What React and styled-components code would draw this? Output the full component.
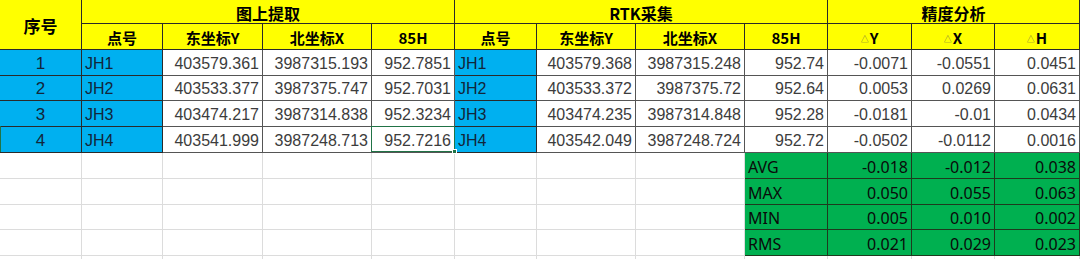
import React from "react";
import styled, { createGlobalStyle, css } from "styled-components";

const GlobalStyle = createGlobalStyle`
  html, body {
    margin: 0;
    padding: 0;
    background: #fff;
  }
  body {
    font-family: "Liberation Sans", "Noto Sans CJK SC", sans-serif;
  }
`;

const COLS = [82, 81, 100, 109, 83, 82, 99, 109, 83, 84, 83, 85];
const ROWS = [24, 26, 26, 25, 26, 26, 26, 26, 25, 26, 26];

const points = [
  {
    no: "1",
    map: ["JH1", "403579.361", "3987315.193", "952.7851"],
    rtk: ["JH1", "403579.368", "3987315.248", "952.74"],
    diff: ["-0.0071", "-0.0551", "0.0451"],
  },
  {
    no: "2",
    map: ["JH2", "403533.377", "3987375.747", "952.7031"],
    rtk: ["JH2", "403533.372", "3987375.72", "952.64"],
    diff: ["0.0053", "0.0269", "0.0631"],
  },
  {
    no: "3",
    map: ["JH3", "403474.217", "3987314.838", "952.3234"],
    rtk: ["JH3", "403474.235", "3987314.848", "952.28"],
    diff: ["-0.0181", "-0.01", "0.0434"],
  },
  {
    no: "4",
    map: ["JH4", "403541.999", "3987248.713", "952.7216"],
    rtk: ["JH4", "403542.049", "3987248.724", "952.72"],
    diff: ["-0.0502", "-0.0112", "0.0016"],
  },
];

const stats = [
  ["AVG", "-0.018", "-0.012", "0.038"],
  ["MAX", "0.050", "0.055", "0.063"],
  ["MIN", "0.005", "0.010", "0.002"],
  ["RMS", "0.021", "0.029", "0.023"],
];

const Sheet = styled.div`
  width: 1080px;
  height: 259px;
  overflow: hidden;
  display: grid;
  grid-template-columns: ${COLS.map((c) => c + "px").join(" ")};
  grid-template-rows: ${ROWS.map((r) => r + "px").join(" ")};
`;

const tones = {
  head: css`
    background: #ffff00;
    color: #000;
    font-family: "Noto Sans CJK SC", "Liberation Sans", sans-serif;
    font-weight: 700;
    justify-content: center;
    border-color: #2a2a2a;
  `,
  blue: css`
    background: #00b0f0;
    color: #12263a;
    border-color: #2a2a2a;
  `,
  white: css`
    background: #fff;
    color: #3c3c3c;
    border-color: #555;
  `,
  green: css`
    background: #00b050;
    color: #0a0a0a;
    font-family: "Noto Sans", "Liberation Sans", sans-serif;
    border-color: #1e3a1e;
  `,
  empty: css`
    background: #fff;
    border-color: #dcdcdc;
  `,
};

const Cell = styled.div`
  box-sizing: border-box;
  position: relative;
  display: flex;
  align-items: center;
  padding: 2px 3px 0;
  font-size: ${(p) => p.$size || 16}px;
  white-space: nowrap;
  overflow: visible;
  border-right: 1px solid;
  border-bottom: 1px solid;
  grid-column: span ${(p) => p.$span || 1};
  grid-row: span ${(p) => p.$rows || 1};
  ${(p) => tones[p.$tone || "white"]}
  justify-content: ${(p) =>
    p.$align === "right" ? "flex-end" : p.$align === "left" ? "flex-start" : "center"};
`;

const Tri = styled.span`
  font-size: 8px;
  font-weight: 400;
  color: #6a6a4a;
  margin-right: 1px;
  align-self: center;
  padding-top: 2px;
`;

const Selection = styled.div`
  position: absolute;
  z-index: 3;
  inset: -1px -1px 0 -1px;
  border: 1px solid #217346;
  pointer-events: none;
  &::after {
    content: "";
    position: absolute;
    right: -3px;
    bottom: -3px;
    width: 5px;
    height: 5px;
    background: #217346;
    border: 1px solid #fff;
    box-sizing: border-box;
  }
`;

const RowMark = styled.div`
  position: absolute;
  z-index: 3;
  left: 0;
  top: -1px;
  bottom: 0;
  width: 1px;
  background: #217346;
`;

const subHeads = ["点号", "东坐标Y", "北坐标X", "85H"];
const deltas = ["Y", "X", "H"];

export default function App() {
  return (
    <>
      <GlobalStyle />
      <Sheet>
        <Cell $tone="head" $rows={2} $size={17}>
          序号
        </Cell>
        <Cell $tone="head" $span={4}>
          图上提取
        </Cell>
        <Cell $tone="head" $span={4}>
          RTK采集
        </Cell>
        <Cell $tone="head" $span={3}>
          精度分析
        </Cell>

        {subHeads.map((h) => (
          <Cell key={"a" + h} $tone="head" $size={15}>
            {h}
          </Cell>
        ))}
        {subHeads.map((h) => (
          <Cell key={"b" + h} $tone="head" $size={15}>
            {h}
          </Cell>
        ))}
        {deltas.map((d) => (
          <Cell key={d} $tone="head" $size={15}>
            <Tri>△</Tri>
            {d}
          </Cell>
        ))}

        {points.map((pt, i) => (
          <React.Fragment key={pt.no}>
            <Cell $tone="blue" $size={17}>
              {i === 3 && <RowMark />}
              {pt.no}
            </Cell>
            <Cell $tone="blue" $align="left">
              {pt.map[0]}
            </Cell>
            {pt.map.slice(1).map((v, j) => (
              <Cell key={"m" + j} $align="right">
                {i === 3 && j === 2 && <Selection />}
                {v}
              </Cell>
            ))}
            <Cell $tone="blue" $align="left">
              {pt.rtk[0]}
            </Cell>
            {pt.rtk.slice(1).map((v, j) => (
              <Cell key={"r" + j} $align="right">
                {v}
              </Cell>
            ))}
            {pt.diff.map((v, j) => (
              <Cell key={"d" + j} $align="right">
                {v}
              </Cell>
            ))}
          </React.Fragment>
        ))}

        {stats.map((row) => (
          <React.Fragment key={row[0]}>
            {COLS.slice(0, 8).map((_, j) => (
              <Cell key={"e" + j} $tone="empty" />
            ))}
            <Cell $tone="green" $align="left">
              {row[0]}
            </Cell>
            {row.slice(1).map((v, j) => (
              <Cell key={"g" + j} $tone="green" $align="right">
                {v}
              </Cell>
            ))}
          </React.Fragment>
        ))}

        {COLS.map((_, j) => (
          <Cell key={"t" + j} $tone="empty" />
        ))}
      </Sheet>
    </>
  );
}
